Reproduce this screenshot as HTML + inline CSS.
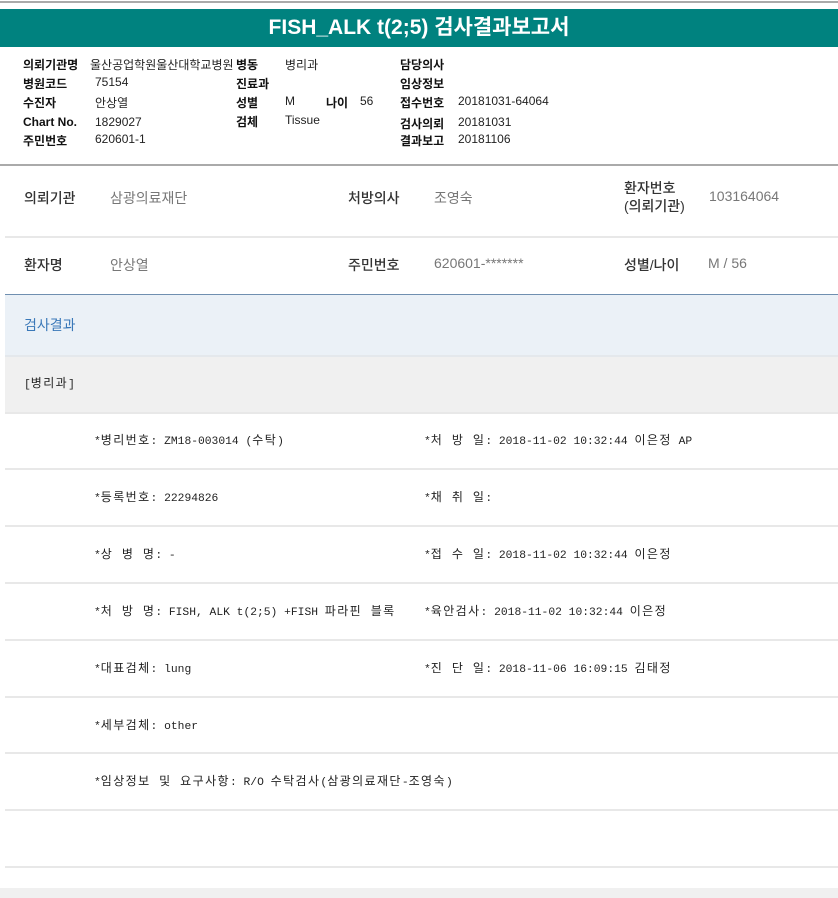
<!DOCTYPE html>
<html><head><meta charset="utf-8"><style>
*{margin:0;padding:0;box-sizing:border-box}
body{width:838px;height:898px;background:#fff;position:relative;overflow:hidden;font-family:"Liberation Sans","Noto Sans CJK KR",sans-serif;color:#222}
.a{position:absolute;white-space:nowrap}
.hl{font-size:12px;font-weight:bold;color:#111}
.hv{font-size:12px;color:#222}
.lb{font-size:14px;color:#333;font-weight:500}
.vl{font-size:14px;color:#777}
.m{font-family:"Liberation Mono","Noto Sans CJK KR",monospace;font-size:11.3px;color:#222}
.m b{font-weight:normal;font-size:12px;letter-spacing:1.4px}
.line{position:absolute;left:5px;right:0;height:2px;background:#e8e8e8}
</style></head><body>
<div class="a" style="left:0;top:1px;width:838px;height:2px;background:#aaa"></div>
<div class="a" style="left:0;top:9px;width:838px;height:38px;background:#00827f;color:#fff;font-size:21px;font-weight:bold;text-align:center;line-height:38px">FISH_ALK t(2;5) 검사결과보고서</div>

<div class="a hl" style="left:23px;top:56px">의뢰기관명</div><div class="a hv" style="left:90px;top:56px">울산공업학원울산대학교병원</div>
<div class="a hl" style="left:236px;top:56px">병동</div><div class="a hv" style="left:285px;top:56px">병리과</div>
<div class="a hl" style="left:400px;top:56px">담당의사</div>
<div class="a hl" style="left:23px;top:75px">병원코드</div><div class="a hv" style="left:95px;top:75px">75154</div>
<div class="a hl" style="left:236px;top:75px">진료과</div>
<div class="a hl" style="left:400px;top:75px">임상정보</div>
<div class="a hl" style="left:23px;top:94px">수진자</div><div class="a hv" style="left:95px;top:94px">안상열</div>
<div class="a hl" style="left:236px;top:94px">성별</div><div class="a hv" style="left:285px;top:94px">M</div>
<div class="a hl" style="left:326px;top:94px">나이</div><div class="a hv" style="left:360px;top:94px">56</div>
<div class="a hl" style="left:400px;top:94px">접수번호</div><div class="a hv" style="left:458px;top:94px">20181031-64064</div>
<div class="a hl" style="left:23px;top:115px">Chart No.</div><div class="a hv" style="left:95px;top:115px">1829027</div>
<div class="a hl" style="left:236px;top:113px">검체</div><div class="a hv" style="left:285px;top:113px">Tissue</div>
<div class="a hl" style="left:400px;top:115px">검사의뢰</div><div class="a hv" style="left:458px;top:115px">20181031</div>
<div class="a hl" style="left:23px;top:132px">주민번호</div><div class="a hv" style="left:95px;top:132px">620601-1</div>
<div class="a hl" style="left:400px;top:132px">결과보고</div><div class="a hv" style="left:458px;top:132px">20181106</div>
<div class="a" style="left:0;top:164px;width:838px;height:2px;background:#aaa"></div>

<div class="a lb" style="left:24px;top:188px">의뢰기관</div><div class="a vl" style="left:110px;top:188px">삼광의료재단</div>
<div class="a lb" style="left:348px;top:188px">처방의사</div><div class="a vl" style="left:434px;top:188px">조영숙</div>
<div class="a lb" style="left:624px;top:179px;line-height:18px">환자번호<br>(의뢰기관)</div><div class="a vl" style="left:709px;top:188px">103164064</div>
<div class="line" style="top:236px"></div>
<div class="a lb" style="left:24px;top:255px">환자명</div><div class="a vl" style="left:110px;top:255px">안상열</div>
<div class="a lb" style="left:348px;top:255px">주민번호</div><div class="a vl" style="left:434px;top:255px">620601-*******</div>
<div class="a lb" style="left:624px;top:255px">성별/나이</div><div class="a vl" style="left:708px;top:255px">M / 56</div>

<div class="a" style="left:5px;top:294px;width:833px;height:61px;background:#ebf1f7;border-top:1px solid #6f8fb0"></div>
<div class="a" style="left:24px;top:315px;font-size:14px;color:#3a78b8">검사결과</div>
<div class="a" style="left:5px;top:355px;width:833px;height:58px;background:#f0f0f0;border-top:2px solid #e4e8ec"></div>
<div class="a m" style="left:24px;top:374px">[<b>병리과</b>]</div>

<div class="line" style="top:412px"></div>
<div class="a m" style="left:94px;top:431px">*<b>병리번호</b>: ZM18-003014 (<b>수탁</b>)</div><div class="a m" style="left:424px;top:431px">*<b>처 방 일</b>: 2018-11-02 10:32:44  <b>이은정</b> AP</div>
<div class="line" style="top:468px"></div>
<div class="a m" style="left:94px;top:488px">*<b>등록번호</b>: 22294826</div><div class="a m" style="left:424px;top:488px">*<b>채 취 일</b>:</div>
<div class="line" style="top:525px"></div>
<div class="a m" style="left:94px;top:545px">*<b>상 병 명</b>: -</div><div class="a m" style="left:424px;top:545px">*<b>접 수 일</b>: 2018-11-02 10:32:44  <b>이은정</b></div>
<div class="line" style="top:582px"></div>
<div class="a m" style="left:94px;top:602px">*<b>처 방 명</b>: FISH, ALK t(2;5) +FISH <b>파라핀 블록</b></div><div class="a m" style="left:424px;top:602px">*<b>육안검사</b>: 2018-11-02 10:32:44  <b>이은정</b></div>
<div class="line" style="top:639px"></div>
<div class="a m" style="left:94px;top:659px">*<b>대표검체</b>: lung</div><div class="a m" style="left:424px;top:659px">*<b>진 단 일</b>: 2018-11-06 16:09:15  <b>김태정</b></div>
<div class="line" style="top:696px"></div>
<div class="a m" style="left:94px;top:716px">*<b>세부검체</b>: other</div>
<div class="line" style="top:752px"></div>
<div class="a m" style="left:94px;top:772px">*<b>임상정보 및 요구사항</b>: R/O <b>수탁검사</b>(<b>삼광의료재단</b>-<b>조영숙</b>)</div>
<div class="line" style="top:809px"></div>
<div class="line" style="top:866px"></div>
<div class="a" style="left:0;top:888px;width:838px;height:10px;background:#f0f0f0"></div>
</body></html>
